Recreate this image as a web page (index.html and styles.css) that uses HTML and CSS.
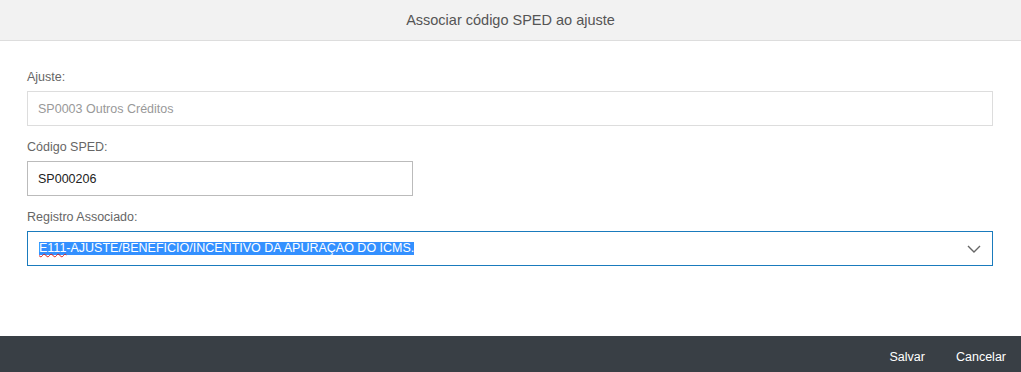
FILE: index.html
```html
<!DOCTYPE html>
<html lang="pt-BR">
<head>
<meta charset="utf-8">
<title>Associar código SPED ao ajuste</title>
<link rel="stylesheet" href="styles.css">
</head>
<body>
<div class="page">
  <div class="header">Associar código SPED ao ajuste</div>
  <div class="content">
    <div class="group">
      <div class="label">Ajuste:</div>
      <div class="field field-disabled">SP0003 Outros Créditos</div>
    </div>
    <div class="group">
      <div class="label">Código SPED:</div>
      <div class="field field-short">SP000206</div>
    </div>
    <div class="group">
      <div class="label">Registro Associado:</div>
      <div class="field field-select">
        <span class="selected"><span class="misspelled">E111</span>-AJUSTE/BENEFICIO/INCENTIVO DA APURAÇAO DO ICMS.</span>
        <svg class="chevron" width="14" height="8" viewBox="0 0 14 8"><polyline points="1,1 7,7 13,1" fill="none" stroke="#666" stroke-width="1.4"/></svg>
      </div>
    </div>
  </div>
  <div class="footer">
    <span class="btn">Salvar</span>
    <span class="btn">Cancelar</span>
  </div>
</div>
</body>
</html>
```
FILE: styles.css
```css
html, body {
  margin: 0;
  padding: 0;
  background: #fff;
}
body {
  font-family: "Liberation Sans", Arial, sans-serif;
}
.page {
  width: 1021px;
  height: 372px;
  display: flex;
  flex-direction: column;
}
.header {
  height: 40px;
  border-bottom: 1px solid #dddddd;
  background: #f2f2f2;
  display: flex;
  align-items: center;
  justify-content: center;
  font-size: 14.5px;
  color: #555;
}
.content {
  flex: 1;
  padding: 26px 28px 0 27px;
}
.group {
  margin-bottom: 11px;
}
.label {
  font-size: 12.5px;
  line-height: 20px;
  color: #666;
  margin-bottom: 4px;
}
.field {
  box-sizing: border-box;
  height: 35px;
  border: 1px solid #bbbbbb;
  padding: 0 10px;
  display: flex;
  align-items: center;
  font-size: 12.5px;
  color: #222;
  background: #fff;
}
.field-disabled {
  border-color: #dddddd;
  color: #999;
}
.field-short {
  width: 386px;
}
.field-select {
  border-color: #1a7bbd;
  justify-content: space-between;
  padding-left: 11px;
  padding-right: 11px;
}
.selected {
  background: #3390ff;
  color: #fff;
  line-height: 13px;
}
.misspelled {
  text-decoration: underline wavy #e0201a;
  text-decoration-thickness: 1px;
  text-underline-offset: 1px;
}
.chevron {
  display: block;
}
.footer {
  box-sizing: border-box;
  height: 36px;
  padding-top: 6px;
  background: #393f45;
  display: flex;
  justify-content: flex-end;
  align-items: center;
  gap: 31px;
  padding-right: 15px;
}
.btn {
  color: #fff;
  font-size: 12.5px;
}
```
